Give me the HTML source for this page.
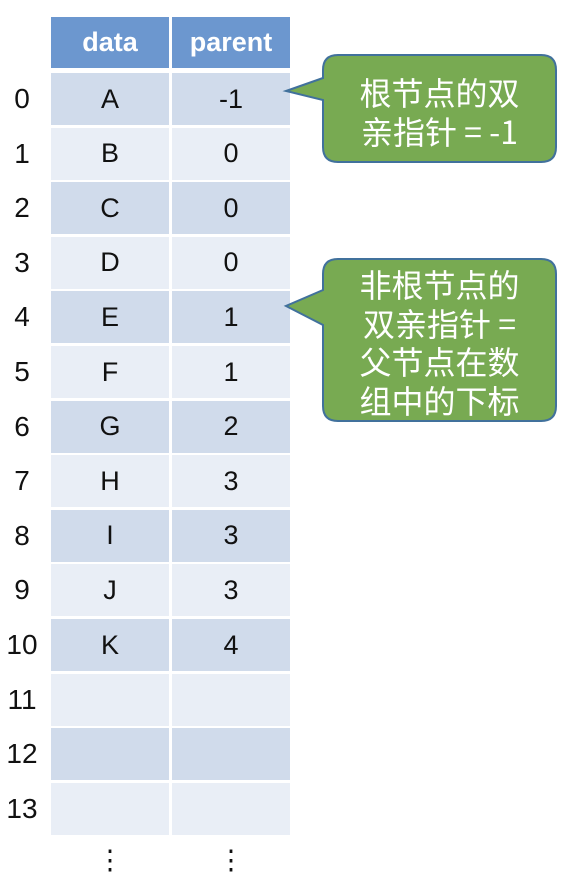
<!DOCTYPE html>
<html><head><meta charset="utf-8"><style>
body{margin:0;width:570px;height:890px;background:#fff;position:relative;overflow:hidden;font-family:"Liberation Sans","Noto Sans CJK SC",sans-serif}
.c{position:absolute;display:flex;align-items:center;justify-content:center;font-size:27px;color:#111}
.h{background:#6c97cf;color:#fff;font-weight:bold;font-size:27px}
.i{position:absolute;left:0;width:44px;text-align:center;font-size:28px;color:#111}
.t{position:absolute;color:#fff;font-size:32px;text-align:center;line-height:38.5px;font-family:"Noto Sans CJK SC",sans-serif;white-space:nowrap}
</style></head><body>
<div class="c h" style="left:51px;top:17px;width:118px;height:51px">data</div>
<div class="c h" style="left:172px;top:17px;width:118px;height:51px">parent</div>
<div id="rows"></div>
<script>
var d=[["A","-1"],["B","0"],["C","0"],["D","0"],["E","1"],["F","1"],["G","2"],["H","3"],["I","3"],["J","3"],["K","4"],["",""],["",""],["",""]];
var h="";
for(var r=0;r<14;r++){var y=73+r*54.6;var bg=r%2?"#e9eef6":"#d0dbeb";
h+='<div class="c" style="left:51px;top:'+y+'px;width:118px;height:52px;background:'+bg+'">'+d[r][0]+'</div>';
h+='<div class="c" style="left:172px;top:'+y+'px;width:118px;height:52px;background:'+bg+'">'+d[r][1]+'</div>';
h+='<div class="i" style="top:'+(y+10)+'px">'+r+'</div>';}
document.getElementById("rows").innerHTML=h;
</script>
<div class="c" style="left:51px;top:845px;width:118px;height:30px">⋮</div>
<div class="c" style="left:172px;top:845px;width:118px;height:30px">⋮</div>
<svg style="position:absolute;left:0;top:0" width="570" height="890">
<path d="M338,55 H541 Q556,55 556,70 V147 Q556,162 541,162 H338 Q323,162 323,147 V100 L286,91 L323,78 V70 Q323,55 338,55 Z" fill="#78aa52" stroke="#41719c" stroke-width="2"/>
<path d="M338,259 H541 Q556,259 556,274 V406 Q556,421 541,421 H338 Q323,421 323,406 V325 L286,306 L323,290 V274 Q323,259 338,259 Z" fill="#78aa52" stroke="#41719c" stroke-width="2"/>
</svg>
<div class="t" style="left:323px;top:73px;width:233px">根节点的双<br>亲指针 = -1</div>
<div class="t" style="left:323px;top:265px;width:233px">非根节点的<br>双亲指针 =<br>父节点在数<br>组中的下标</div>
</body></html>
